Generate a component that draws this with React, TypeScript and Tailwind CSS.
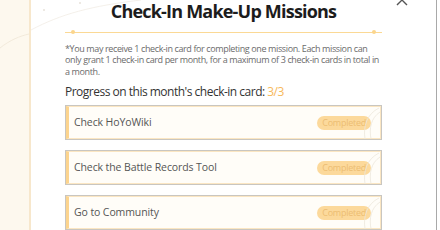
import React from "react";

const missions = ["Check HoYoWiki", "Check the Battle Records Tool", "Go to Community"];

function MissionCard({ title }: { title: string }) {
  return (
    <div className="relative h-[35px] border border-[#c9c6c0] bg-[#fffdf8]">
      <div className="flex h-full items-center justify-between border border-[#fbe6c2] border-l-[3px] border-l-[#fcd48e] pl-[5px] pr-[9px]">
        <span className="text-[10.5px] tracking-[-0.1px] text-[#555]">{title}</span>
        <span className="rounded-full bg-[#fcd99b] px-[5px] text-[9px] leading-[14px] tracking-[-0.25px] text-[#ecbd72]">
          Completed
        </span>
      </div>
      {/* faint corner decoration */}
      <svg className="pointer-events-none absolute right-0 top-0" width="28" height="33" viewBox="0 0 28 33">
        <path d="M26 2 C14 8 10 20 12 33" stroke="#ece7dc" strokeWidth="0.8" fill="none" />
        <path d="M27 6 C18 12 16 22 18 33" stroke="#ece7dc" strokeWidth="0.8" fill="none" />
      </svg>
    </div>
  );
}

export default function App() {
  return (
    <div className="flex h-[230px] w-[440px] overflow-hidden bg-white" style={{ fontFamily: '"Open Sans", "Noto Sans", sans-serif' }}>
      {/* left backdrop strip */}
      <div className="relative w-[29px] shrink-0 bg-[#fdf8ee]">
        <svg className="absolute left-0 top-0" width="29" height="60" viewBox="0 0 29 60">
          <path d="M0 48 C10 40 20 36 29 34" stroke="#efe6d6" strokeWidth="0.8" fill="none" />
        </svg>
      </div>
      <div className="w-[2px] shrink-0 bg-[#f7e7cc]" />

      {/* modal */}
      <div className="relative flex w-[406px] shrink-0 flex-col border-r border-[#a9a9a9] pl-[34px] pr-[54px]">
        <svg className="pointer-events-none absolute left-0 top-0" width="120" height="40" viewBox="0 0 120 40">
          <path d="M0 30 C30 14 60 6 110 0" stroke="#f1ece4" strokeWidth="0.8" fill="none" />
          <circle cx="13" cy="10" r="1" fill="#e7e2da" />
          <circle cx="49" cy="3" r="1" fill="#e7e2da" />
        </svg>

        {/* close button */}
        <svg className="absolute right-[28px] top-[-6px]" width="12" height="12" viewBox="0 0 12 12">
          <path d="M1 1 L11 11 M11 1 L1 11" stroke="#555" strokeWidth="1.4" />
        </svg>

        <h1 className="relative mt-[-1px] text-center text-[18px] font-bold leading-[24px] tracking-[-0.8px] text-[#1c1c1c]">
          Check-In Make-Up Missions
        </h1>

        {/* divider */}
        <div className="relative mt-[8px] flex h-[3px] items-center">
          <div className="h-[1px] w-full bg-[#fbd995]" />
          <div className="absolute left-[6px] h-[4px] w-[4px] rounded-full bg-[#fbd58c]" />
          <div className="absolute right-[6px] h-[4px] w-[4px] rounded-full bg-[#fbd58c]" />
        </div>

        <p className="mt-[9px] text-[9px] leading-[11.5px] tracking-[-0.38px] text-[#6b6b6b]">
          *You may receive 1 check-in card for completing one mission. Each mission can only grant 1 check-in card per month, for a maximum of 3 check-in cards in total in a month.
        </p>

        <div className="mt-[6px] text-[12px] leading-[18px] tracking-[-0.5px] text-[#333]">
          Progress on this month's check-in card: <span className="text-[#f7b95a]">3/3</span>
        </div>

        <div className="mt-[4px] flex flex-col gap-[10px]">
          {missions.map((m) => (
            <MissionCard key={m} title={m} />
          ))}
        </div>
      </div>
    </div>
  );
}
